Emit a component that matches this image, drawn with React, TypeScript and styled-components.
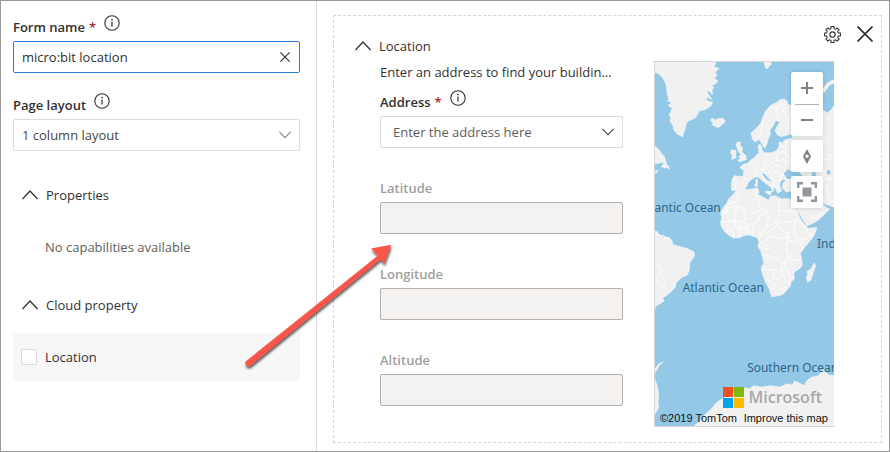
import React from "react";
import styled, { createGlobalStyle } from "styled-components";

const GlobalStyle = createGlobalStyle`
  *, *::before, *::after { box-sizing: border-box; }
  body { margin: 0; background: #fff; }
  body, input, select, button {
    font-family: "Open Sans", "Noto Sans", sans-serif;
    font-size: 13px;
    line-height: 20px;
    color: #323130;
  }
  svg { display: block; }
`;

const Page = styled.div`
  position: relative;
  display: grid;
  grid-template-columns: 316px minmax(0, 1fr);
  min-height: 100vh;
  border: 1px solid #999;
`;

const Sidebar = styled.aside`
  padding: 16px 16px 16px 12px;
  border-right: 1px solid #dcdcdc;
`;

const LabelRow = styled.div`
  display: flex;
  align-items: center;
  gap: 8px;
  height: 20px;
`;

const Label = styled.label<{ $muted?: boolean }>`
  font-weight: 600;
  color: ${(p) => (p.$muted ? "#a19f9d" : "#323130")};
`;

const Required = styled.span`
  margin-left: 4px;
  color: #a4262c;
`;

const IconButton = styled.button`
  display: grid;
  place-items: center;
  flex: none;
  padding: 0;
  border: 0;
  background: none;
  color: #323130;
`;

const InfoButton = styled(IconButton)`
  align-self: flex-start;
  margin-top: -2px;
`;

const Field = styled.div<{ $tone?: "focus" | "disabled" }>`
  display: grid;
  grid-template-columns: minmax(0, 1fr) 28px;
  align-items: center;
  height: 32px;
  border: 1px solid
    ${(p) => (p.$tone === "focus" ? "#2b7cd3" : p.$tone === "disabled" ? "#b3b0ad" : "#dcdcdc")};
  border-radius: 2px;
  background: ${(p) => (p.$tone === "disabled" ? "#f3f2f1" : "#fff")};
  > svg { grid-area: 1 / 2; justify-self: center; pointer-events: none; }
`;

const TextBox = styled.input`
  width: 100%;
  height: 30px;
  padding: 0 8px;
  border: 0;
  outline: 0;
  background: transparent;
`;

const Select = styled.select<{ $placeholder?: boolean }>`
  grid-area: 1 / 1 / 2 / 3;
  width: 100%;
  height: 30px;
  padding: 0 ${(p) => (p.$placeholder ? 12 : 8)}px;
  border: 0;
  outline: 0;
  appearance: none;
  background: transparent;
  color: ${(p) => (p.$placeholder ? "#605e5c" : "#484644")};
`;

const LayoutGroup = styled.div`
  margin-top: 22px;
`;

const LabelledField = styled.div`
  display: grid;
  gap: 4px;
`;

const SectionToggle = styled.button`
  display: flex;
  align-items: center;
  gap: 8px;
  padding: 0;
  border: 0;
  background: none;
`;

const SidebarSection = styled.section<{ $gap: number }>`
  margin-top: ${(p) => p.$gap}px;
  > button { padding-left: 9px; }
`;

const EmptyText = styled.p`
  margin: 32px 0 0 32px;
  color: #605e5c;
`;

const CheckRow = styled.label`
  display: flex;
  align-items: center;
  gap: 8px;
  height: 48px;
  margin-top: 18px;
  padding: 0 8px;
  background: #f7f7f7;
`;

const CheckBox = styled.input`
  appearance: none;
  width: 16px;
  height: 16px;
  margin: 0;
  border: 1px solid #dcdcdc;
  border-radius: 2px;
  background: #fff;
`;

const Main = styled.main`
  display: grid;
  padding: 14px 7px 8px 16px;
`;

const Card = styled.section`
  display: grid;
  grid-template-columns: minmax(0, 1fr) 227px;
  column-gap: 31px;
  border: 1px dashed #d6d6d6;
`;

const FormColumn = styled.div`
  padding: 20px 0 0 21px;
`;

const FormBody = styled.div`
  padding-left: 25px;
`;

const Description = styled.p`
  margin: 6px 0 10px;
  overflow: hidden;
  white-space: nowrap;
`;

const Readings = styled.div`
  display: grid;
  gap: 30px;
  margin-top: 30px;
`;

const MapColumn = styled.div`
  display: flex;
  flex-direction: column;
  padding: 0 47px 15px 0;
`;

const CardActions = styled.div`
  display: flex;
  align-items: center;
  justify-content: flex-end;
  gap: 16px;
  height: 45px;
  margin-right: -39px;
  padding-bottom: 9px;
`;

const MapView = styled.div`
  position: relative;
  flex: 1;
  overflow: hidden;
  border: 1px solid #d6d6d6;
  border-right: 0;
  background: #93c8e6;
  > svg { position: absolute; inset: 0; width: 100%; height: 100%; }
`;

const MapControls = styled.div`
  position: absolute;
  top: 10px;
  right: 11px;
  display: grid;
  gap: 4px;
`;

const ControlGroup = styled.div`
  display: grid;
  border-radius: 2px;
  background: #fff;
  box-shadow: 0 0 4px rgba(0, 0, 0, 0.16);
`;

const MapButton = styled(IconButton)`
  width: 32px;
  height: 32px;
  color: #7d8185;
`;

const Divider = styled.div`
  height: 1px;
  margin: 0 4px -1px;
  background: #b4b4b4;
`;

const MapFooter = styled.div`
  position: absolute;
  right: 6px;
  bottom: 0;
  left: 5px;
  display: grid;
  gap: 2px;
`;

const Brand = styled.div`
  display: flex;
  align-items: center;
  justify-content: flex-end;
  gap: 5px;
  margin-right: 6px;
  font: 600 16px/22px "Open Sans", sans-serif;
  color: #a8a8a8;
`;

const Credits = styled.div`
  display: flex;
  justify-content: space-between;
  white-space: nowrap;
  font: 11px/16px "Liberation Sans", Arial, sans-serif;
  color: #111;
  a { color: inherit; text-decoration: none; }
`;

const Callout = styled.svg`
  position: absolute;
  top: 239px;
  left: 239px;
  pointer-events: none;
`;

const InfoIcon = () => (
  <svg width="16" height="16" viewBox="0 0 16 16" fill="none" stroke="currentColor">
    <circle cx="8" cy="8" r="7.2" strokeWidth="1.1" />
    <path d="M8 6.4V11.6" strokeWidth="1.2" />
    <circle cx="8" cy="4.6" r=".8" fill="currentColor" stroke="none" />
  </svg>
);

const CrossIcon = ({ size, weight }: { size: number; weight: number }) => (
  <svg width={size} height={size} viewBox="0 0 16 16" fill="none" stroke="currentColor" strokeWidth={weight}>
    <path d="M.5.5 15.5 15.5M15.5.5.5 15.5" />
  </svg>
);

const ChevronDown = ({ color }: { color: string }) => (
  <svg width="12" height="8" viewBox="0 0 12 8" fill="none" stroke={color} strokeWidth="1.1">
    <path d="M.4.8 6 6.6 11.6.8" />
  </svg>
);

const ChevronUp = () => (
  <svg width="16" height="10" viewBox="0 0 16 10" fill="none" stroke="#323130" strokeWidth="1.3">
    <path d="M.4 9 8 1 15.6 9" />
  </svg>
);

const teeth = Array.from({ length: 8 }, (_, i) => {
  const at = (r: number, deg: number) => {
    const a = ((deg + i * 45) * Math.PI) / 180;
    return `${(8 + r * Math.cos(a)).toFixed(2)} ${(8 + r * Math.sin(a)).toFixed(2)}`;
  };
  return `${at(5.7, -14)} L${at(7.6, -11)} L${at(7.6, 11)} L${at(5.7, 14)}`;
});

const GearIcon = () => (
  <svg width="17" height="17" viewBox="0 0 16 16" fill="none" stroke="currentColor" strokeWidth="1">
    <path d={`M${teeth.join(" L")}Z`} strokeLinejoin="round" />
    <circle cx="8" cy="8" r="2.5" />
  </svg>
);

const Info = ({ about }: { about: string }) => (
  <InfoButton type="button" aria-label={`About ${about}`}>
    <InfoIcon />
  </InfoButton>
);

const WorldMap = () => (
  <svg viewBox="0 0 540 1095" preserveAspectRatio="xMidYMid slice" aria-hidden="true">
    <g fill="#f1f1f1" stroke="#fbfbfb" strokeWidth="1.5" strokeLinejoin="round">
      {/* Greenland, Iceland, Labrador, Svalbard */}
      <g transform="translate(-12 -9)">
        <path d="M0 38 20 42 32 52 38 60 44 72 48 88 50 108 55 122 50 126 58 128 62 134 52 138 58 144 65 146 60 160 55 166 60 176 58 188 66 200 70 214 80 226 97 234 99 222 104 208 106 196 112 188 122 182 130 180 138 172 146 156 158 154 172 148 182 140 186 130 176 128 164 120 172 116 184 122 176 110 168 98 176 96 186 108 184 94 190 84 180 82 196 74 202 66 190 58 200 50 194 40 205 28 190 24 196 12 190 0 0 0Z" />
        <path d="M180 182 188 178 190 184 198 182 208 178 218 178 224 188 216 196 204 206 190 202 184 196 190 192 184 190Z" />
        <path d="M0 246 18 268 24 272 32 284 42 294 44 306 32 312 12 316 0 320Z" />
        <path d="M38 302 46 308 46 316 54 322 56 332 48 326 40 328 32 324 38 314Z" />
        <path d="M12 340 22 334 20 340 12 345Z" />
      </g>
      <path d="M328 0 334 18 340 20 345 10 350 8 350 0Z" />
      {/* South America and the Antarctic Peninsula */}
      <g transform="translate(-42 357)">
        <path d="M40 148 52 156 60 168 84 170 94 180 96 192 124 200 140 204 160 214 162 226 148 246 146 268 140 284 122 292 106 308 104 320 90 336 76 346 66 352 70 362 58 370 48 374 40 390Z" />
        <path d="M40 248 56 258 62 274 54 284 68 292 74 308 62 320 70 332M44 280 54 284 50 300 62 320M48 156 54 166 68 164 78 174" fill="none" strokeWidth="3" />
      </g>
      <path d="M0 924 12 908 26 902 14 912 4 930 0 936ZM0 956 8 974 12 1000 10 1020 12 1040 0 1060Z" />
      {/* Africa and Madagascar */}
      <g transform="translate(180 342)">
        <path d="M64 46 74 46 90 42 110 40 130 37 134 50 130 56 146 64 162 74 168 62 182 60 202 70 218 68 232 72 240 84 242 94 250 108 256 126 268 144 278 154 282 158 308 156 304 170 294 188 278 208 266 222 258 234 262 252 264 268 256 280 242 288 238 298 240 310 230 320 228 332 216 346 204 358 188 362 172 364 168 354 164 340 152 318 142 290 140 276 148 262 144 244 138 226 130 212 134 202 128 186 114 182 106 178 90 180 76 186 58 188 44 180 30 168 20 152 18 140 22 126 18 114 24 98 36 84 42 70 54 58Z" />
        <path d="M300 262 304 272 298 290 290 314 280 320 276 308 280 298 278 288 290 280Z" />
        <g fill="none" strokeWidth="2.6" stroke="#fff">
          <path d="M64 60 70 74 44 84 24 110 38 110 38 98 66 90 112 114 134 106 156 110M126 40 122 58 132 76 134 98 156 104M156 104 154 116 136 118 130 140 114 144 98 146 86 142 76 156 60 152 58 140 92 136 90 112M66 88 62 134 32 140 20 138M196 72 194 106 244 106M194 106 190 140 160 150 152 164 136 172 128 184M156 110 164 118 158 150M190 138 206 142 242 136 252 124M190 140 182 158 162 168 136 182 134 192M242 136 240 158 230 168 216 172 204 166 190 152M250 132 262 144 278 158 280 172 294 178 276 192 256 190 242 180 240 160M224 176 220 194 236 196 258 202 266 218M266 192 266 206M218 176 220 196 214 214 218 234 230 240 226 252 240 254 262 250M134 202 146 202 158 192 160 184 178 182 196 190 218 186M144 214 150 222 162 218 158 204M146 240 168 240 178 252 194 250 204 262 220 252 218 236M142 282 172 284 202 284 204 262 212 260 214 282 230 272 236 260M180 286 178 312 162 318M178 308 190 314 206 300 226 294 214 284M206 300 200 284M164 338 176 340 180 320M226 296 228 310 222 322 230 324M204 340 212 332 216 340 208 348Z" />
          <path d="M30 150 44 152 48 162 34 170M48 162 56 168 58 186M60 154 76 158 76 184M78 158 96 156 98 178M98 150 108 178M116 146 114 180" />
        </g>
      </g>
      {/* Europe, western Asia and Arabia */}
      <g transform="translate(210 87)">
        <path d="M96 192 104 186 100 166 106 160 112 168 112 178 120 186 140 186 156 180 164 168 164 154 172 154 176 162 178 150 186 146 204 142 204 128 184 134 170 138 158 132 152 120 158 106 166 94 154 88 146 106 136 118 138 130 132 142 128 160 120 172 112 160 104 146 92 154 84 146 80 126 94 114 108 98 116 76 124 60 138 44 154 36 168 26 180 24 190 32 188 40 210 46 298 52 308 64 320 54 330 44 340 440 330 350 292 336 302 348 316 356 300 372 278 392 248 406 240 394 228 374 212 344 210 320 208 300 184 304 174 290 176 276 188 270 176 266 168 274 166 284 172 300 160 308 152 292 140 272 122 250 114 244 114 252 124 266 142 276 156 288 148 290 146 304 138 288 118 274 104 262 94 258 82 266 74 272 64 292 56 302 44 308 32 298 22 300 20 284 24 262 30 255 56 258 58 240 46 230 58 220 70 218 78 208 90 200Z" />
        <path d="M38 154 48 154 46 162 54 172 52 184 64 194 66 206 44 214 40 208 48 204 42 198 50 192 42 182 38 170 34 164ZM20 178 34 178 34 202 20 206 24 196 18 188ZM94 266 100 268 98 288 90 286 94 278ZM124 302 142 302 138 314 124 306Z" />
        <path d="M296 2 312-20 330-30" fill="none" stroke="#f1f1f1" strokeWidth="11" />
        <g fill="none" strokeWidth="2.4" stroke="#fff">
          <path d="M102 142 112 116 118 92 128 70 142 52 158 50 170 40 186 40M158 50 162 70 158 88M170 40 178 62 194 92 184 132M24 266 36 270 32 296M54 258 76 270M76 214 84 224 94 230 92 240 98 250 92 260M92 240 104 236 120 236 126 228 118 216 128 206 120 188M128 206 140 216 156 210 158 192 150 184M120 236 120 248 136 244 142 230 158 224 172 230M156 212 176 204 190 214 204 220M160 188 176 182 190 192 196 208M164 168 182 166 190 180M176 156 194 154M136 246 144 260 150 272 168 268 170 250 158 242 144 244M168 250 188 256M150 272 148 286M296 204 318 208 318 192 334 188M284 256 308 268 330 258M206 304 222 310 236 324 252 330M218 346 240 344 270 336M256 384 280 378 298 368M300 290 318 308 308 320 330 334" />
        </g>
        <path d="M178 250 190 236 200 242 216 236 238 260 210 266 188 264ZM262 244 276 246 274 256 282 266 284 294 270 286 264 264ZM308 238 320 240 318 250 308 252ZM290 52 302 46 324 52 310 66Z" fill="#93c8e6" stroke="none" />
      </g>
      {/* Antarctica */}
      <g transform="translate(-42 732)">
        <path d="M150 370 176 350 194 328 212 312 228 292 246 280 268 272 292 258 308 248 328 250 340 242 362 246 390 242 420 246 438 236 456 240 462 228 474 232 492 242 498 228 514 216 534 212 548 194 566 210 600 212 600 380Z" />
      </g>
    </g>
    <g fill="#2f6587" fontFamily="Noto Sans, sans-serif" fontSize="36">
      <text x="-46" y="450">Atlantic Ocean</text>
      <text x="84" y="692">Atlantic Ocean</text>
      <text x="488" y="560">Indian Ocean</text>
      <text x="278" y="932">Southern Ocean</text>
    </g>
  </svg>
);

const LogoIcon = () => (
  <svg width="21" height="21" viewBox="0 0 21 21">
    <path fill="#f25022" d="M0 0H10V10H0Z" />
    <path fill="#7fba00" d="M11 0H21V10H11Z" />
    <path fill="#00a4ef" d="M0 11H10V21H0Z" />
    <path fill="#ffb900" d="M11 11H21V21H11Z" />
  </svg>
);

const Reading = ({ name }: { name: string }) => (
  <LabelledField>
    <Label $muted htmlFor={name}>{name}</Label>
    <Field $tone="disabled">
      <TextBox id={name} disabled />
    </Field>
  </LabelledField>
);

export default function App() {
  return (
    <>
      <GlobalStyle />
      <Page>
        <Sidebar>
          <LabelledField>
            <LabelRow>
              <Label htmlFor="form-name">Form name<Required>*</Required></Label>
              <Info about="form name" />
            </LabelRow>
            <Field $tone="focus">
              <TextBox id="form-name" defaultValue="micro:bit location" />
              <IconButton type="button" aria-label="Clear form name">
                <CrossIcon size={10} weight={1.8} />
              </IconButton>
            </Field>
          </LabelledField>
          <LayoutGroup>
            <LabelledField>
              <LabelRow>
                <Label htmlFor="page-layout">Page layout</Label>
                <Info about="page layout" />
              </LabelRow>
              <Field>
                <Select id="page-layout"><option>1 column layout</option></Select>
                <ChevronDown color="#8a8886" />
              </Field>
            </LabelledField>
          </LayoutGroup>
          <SidebarSection $gap={34}>
            <SectionToggle type="button" aria-expanded="true"><ChevronUp />Properties</SectionToggle>
            <EmptyText>No capabilities available</EmptyText>
          </SidebarSection>
          <SidebarSection $gap={38}>
            <SectionToggle type="button" aria-expanded="true"><ChevronUp />Cloud property</SectionToggle>
            <CheckRow><CheckBox type="checkbox" />Location</CheckRow>
          </SidebarSection>
        </Sidebar>
        <Main>
          <Card>
            <FormColumn>
              <SectionToggle type="button" aria-expanded="true"><ChevronUp />Location</SectionToggle>
              <FormBody>
                <Description>Enter an address to find your buildin...</Description>
                <LabelledField>
                  <LabelRow>
                    <Label htmlFor="address">Address<Required>*</Required></Label>
                    <Info about="address" />
                  </LabelRow>
                  <Field>
                    <Select id="address" $placeholder><option>Enter the address here</option></Select>
                    <ChevronDown color="#484644" />
                  </Field>
                </LabelledField>
                <Readings>
                  <Reading name="Latitude" />
                  <Reading name="Longitude" />
                  <Reading name="Altitude" />
                </Readings>
              </FormBody>
            </FormColumn>
            <MapColumn>
              <CardActions>
                <IconButton type="button" aria-label="Settings"><GearIcon /></IconButton>
                <IconButton type="button" aria-label="Remove"><CrossIcon size={16} weight={1.7} /></IconButton>
              </CardActions>
              <MapView>
                <WorldMap />
                <MapControls>
                  <ControlGroup>
                    <MapButton type="button" aria-label="Zoom in">
                      <svg width="12" height="12" viewBox="0 0 12 12" stroke="currentColor" strokeWidth="2"><path d="M6 0V12M0 6H12" /></svg>
                    </MapButton>
                    <Divider />
                    <MapButton type="button" aria-label="Zoom out">
                      <svg width="12" height="12" viewBox="0 0 12 12" stroke="currentColor" strokeWidth="2"><path d="M0 6H12" /></svg>
                    </MapButton>
                  </ControlGroup>
                  <ControlGroup>
                    <MapButton type="button" aria-label="Reset bearing">
                      <svg width="8" height="15" viewBox="0 0 8 15" fill="currentColor" fillRule="evenodd"><path d="M4 0 8 7.5 4 15 0 7.5ZM4 5.6A1.7 1.7 0 1 0 4 9 1.7 1.7 0 1 0 4 5.6Z" /></svg>
                    </MapButton>
                  </ControlGroup>
                  <ControlGroup>
                    <MapButton type="button" aria-label="Full screen">
                      <svg width="20" height="20" viewBox="0 0 20 20" fill="none" stroke="#93979e" strokeWidth="2.4">
                        <path d="M1.2 6V1.2H6M14 1.2H18.8V6M18.8 14V18.8H14M6 18.8H1.2V14" />
                        <path d="M5.5 5.5H14.5V14.5H5.5Z" fill="#93979e" stroke="none" />
                      </svg>
                    </MapButton>
                  </ControlGroup>
                </MapControls>
                <MapFooter>
                  <Brand><LogoIcon />Microsoft</Brand>
                  <Credits><span>©2019 TomTom</span><a href="#improve">Improve this map</a></Credits>
                </MapFooter>
              </MapView>
            </MapColumn>
          </Card>
        </Main>
        <Callout width="160" height="136" viewBox="240 240 160 136" aria-hidden="true">
          <defs>
            <filter id="drop" x="-10%" y="-10%" width="125%" height="125%">
              <feDropShadow dx="0.6" dy="2.4" stdDeviation="1.1" floodColor="#000" floodOpacity=".65" />
            </filter>
          </defs>
          <path
            d="M245.6 361.5 378 255.6 371 248.6 391.3 244.8 384.2 264 380.8 259.2 250 366C247 367.2 244.4 364 245.6 361.5Z"
            fill="#f9564a"
            filter="url(#drop)"
          />
        </Callout>
      </Page>
    </>
  );
}
